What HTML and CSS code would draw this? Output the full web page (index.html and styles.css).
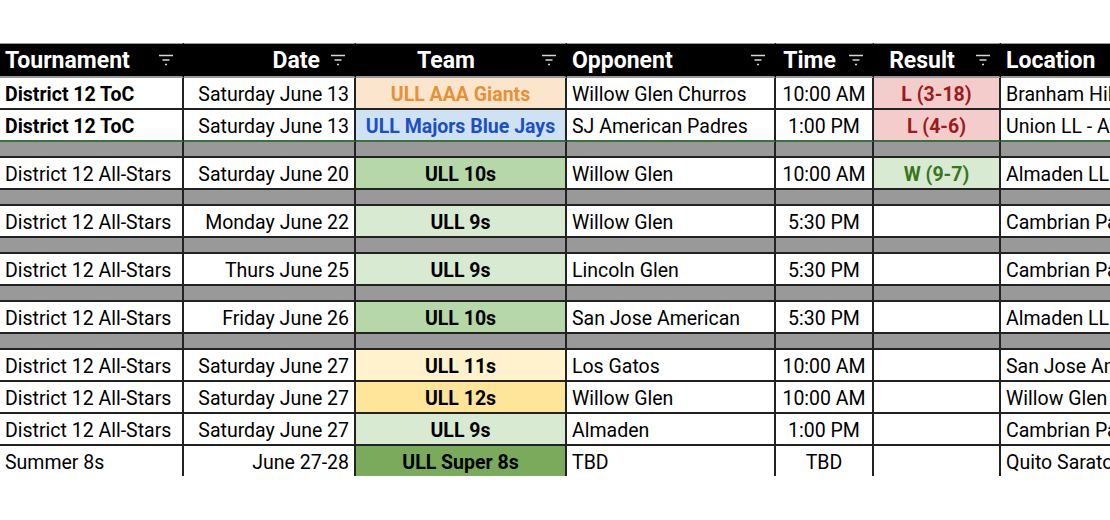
FILE: index.html
```html
<!DOCTYPE html>
<html lang="en">
<head>
<meta charset="utf-8">
<title>Schedule</title>
<link rel="stylesheet" href="styles.css">
</head>
<body>
<div class="sheet">
  <table class="schedule">
    <thead>
      <tr class="head-row">
        <th class="col-tour"><div class="hd hd-left"><span class="hd-label">Tournament</span><svg class="filter" viewBox="0 0 16 12" width="16" height="12"><path d="M1 1.5H15M4.5 6H11.5M7 10.5H9"/></svg></div></th>
        <th class="col-date"><div class="hd hd-right"><span class="hd-label">Date</span><svg class="filter" viewBox="0 0 16 12" width="16" height="12"><path d="M1 1.5H15M4.5 6H11.5M7 10.5H9"/></svg></div></th>
        <th class="col-team"><div class="hd hd-center"><span class="hd-label">Team</span><svg class="filter" viewBox="0 0 16 12" width="16" height="12"><path d="M1 1.5H15M4.5 6H11.5M7 10.5H9"/></svg></div></th>
        <th class="col-opp"><div class="hd hd-left"><span class="hd-label">Opponent</span><svg class="filter" viewBox="0 0 16 12" width="16" height="12"><path d="M1 1.5H15M4.5 6H11.5M7 10.5H9"/></svg></div></th>
        <th class="col-time"><div class="hd hd-center"><span class="hd-label">Time</span><svg class="filter" viewBox="0 0 16 12" width="16" height="12"><path d="M1 1.5H15M4.5 6H11.5M7 10.5H9"/></svg></div></th>
        <th class="col-result"><div class="hd hd-center"><span class="hd-label">Result</span><svg class="filter" viewBox="0 0 16 12" width="16" height="12"><path d="M1 1.5H15M4.5 6H11.5M7 10.5H9"/></svg></div></th>
        <th class="col-loc"><div class="hd hd-left"><span class="hd-label">Location</span><svg class="filter" viewBox="0 0 16 12" width="16" height="12"><path d="M1 1.5H15M4.5 6H11.5M7 10.5H9"/></svg></div></th>
      </tr>
    </thead>
    <tbody>
      <tr class="row">
        <td class="left bold">District 12 ToC</td>
        <td class="right">Saturday June 13</td>
        <td class="center bold team-giants">ULL AAA Giants</td>
        <td class="left">Willow Glen Churros</td>
        <td class="center">10:00 AM</td>
        <td class="center bold res-loss">L (3-18)</td>
        <td class="left">Branham Hills</td>
      </tr>
      <tr class="row row-green-edge">
        <td class="left bold">District 12 ToC</td>
        <td class="right">Saturday June 13</td>
        <td class="center bold team-jays">ULL Majors Blue Jays</td>
        <td class="left">SJ American Padres</td>
        <td class="center">1:00 PM</td>
        <td class="center bold res-loss">L (4-6)</td>
        <td class="left">Union LL - Alta Vista</td>
      </tr>
      <tr class="spacer"><td></td><td></td><td></td><td></td><td></td><td></td><td></td></tr>
      <tr class="row">
        <td class="left">District 12 All-Stars</td>
        <td class="right">Saturday June 20</td>
        <td class="center bold team-green2">ULL 10s</td>
        <td class="left">Willow Glen</td>
        <td class="center">10:00 AM</td>
        <td class="center bold res-win">W (9-7)</td>
        <td class="left">Almaden LL</td>
      </tr>
      <tr class="spacer"><td></td><td></td><td></td><td></td><td></td><td></td><td></td></tr>
      <tr class="row">
        <td class="left">District 12 All-Stars</td>
        <td class="right">Monday June 22</td>
        <td class="center bold team-green3">ULL 9s</td>
        <td class="left">Willow Glen</td>
        <td class="center">5:30 PM</td>
        <td class="center"></td>
        <td class="left">Cambrian Park</td>
      </tr>
      <tr class="spacer"><td></td><td></td><td></td><td></td><td></td><td></td><td></td></tr>
      <tr class="row">
        <td class="left">District 12 All-Stars</td>
        <td class="right">Thurs June 25</td>
        <td class="center bold team-green3">ULL 9s</td>
        <td class="left">Lincoln Glen</td>
        <td class="center">5:30 PM</td>
        <td class="center"></td>
        <td class="left">Cambrian Park</td>
      </tr>
      <tr class="spacer"><td></td><td></td><td></td><td></td><td></td><td></td><td></td></tr>
      <tr class="row">
        <td class="left">District 12 All-Stars</td>
        <td class="right">Friday June 26</td>
        <td class="center bold team-green2">ULL 10s</td>
        <td class="left">San Jose American</td>
        <td class="center">5:30 PM</td>
        <td class="center"></td>
        <td class="left">Almaden LL</td>
      </tr>
      <tr class="spacer"><td></td><td></td><td></td><td></td><td></td><td></td><td></td></tr>
      <tr class="row">
        <td class="left">District 12 All-Stars</td>
        <td class="right">Saturday June 27</td>
        <td class="center bold team-yellow3">ULL 11s</td>
        <td class="left">Los Gatos</td>
        <td class="center">10:00 AM</td>
        <td class="center"></td>
        <td class="left">San Jose American</td>
      </tr>
      <tr class="row">
        <td class="left">District 12 All-Stars</td>
        <td class="right">Saturday June 27</td>
        <td class="center bold team-yellow2">ULL 12s</td>
        <td class="left">Willow Glen</td>
        <td class="center">10:00 AM</td>
        <td class="center"></td>
        <td class="left">Willow Glen</td>
      </tr>
      <tr class="row">
        <td class="left">District 12 All-Stars</td>
        <td class="right">Saturday June 27</td>
        <td class="center bold team-green3">ULL 9s</td>
        <td class="left">Almaden</td>
        <td class="center">1:00 PM</td>
        <td class="center"></td>
        <td class="left">Cambrian Park</td>
      </tr>
      <tr class="row row-last">
        <td class="left">Summer 8s</td>
        <td class="right">June 27-28</td>
        <td class="center bold team-green1">ULL Super 8s</td>
        <td class="left">TBD</td>
        <td class="center">TBD</td>
        <td class="center"></td>
        <td class="left">Quito Saratoga</td>
      </tr>
    </tbody>
  </table>
</div>
</body>
</html>
```

FILE: styles.css
```css
* {
  box-sizing: border-box;
}

html, body {
  margin: 0;
  padding: 0;
  background: #ffffff;
}

body {
  width: 1110px;
  height: 520px;
  overflow: hidden;
  font-family: Roboto, "Liberation Sans", Arial, sans-serif;
  color: #000;
}

.sheet {
  padding-top: 43px;
}

.schedule {
  border-collapse: separate;
  border-spacing: 0;
  table-layout: fixed;
  width: 1221px;
}

.col-tour { width: 184px; }
.col-date { width: 172px; }
.col-team { width: 211px; }
.col-opp { width: 209px; }
.col-time { width: 98px; }
.col-result { width: 127px; }
.col-loc { width: 220px; }

.head-row th {
  background: #000;
  color: #fff;
  height: 35px;
  padding: 0 8px 0 5px;
  border-top: 1px solid #9a9a9a;
  border-bottom: 2px solid #9a9a9a;
  border-right: 2px solid #000;
  font-weight: 700;
  font-size: 23px;
  text-align: left;
}

.hd {
  display: flex;
  align-items: center;
  gap: 10px;
}

.hd-label {
  flex: 1;
  white-space: nowrap;
}

.hd-left .hd-label { text-align: left; }
.hd-right .hd-label { text-align: right; }
.hd-center .hd-label { text-align: center; }

.filter {
  flex: none;
  fill: none;
  stroke: #d6d6d6;
  stroke-width: 1.5;
}

.row td {
  height: 32px;
  padding: 2px 5px 0 5px;
  border-right: 2px solid #222;
  border-bottom: 2px solid #222;
  font-size: 19.5px;
  white-space: nowrap;
  overflow: hidden;
  vertical-align: middle;
}

.row-green-edge td {
  border-bottom-color: #3f6e3f;
}

.row-last td {
  border-bottom: none;
  height: 30px;
}

.spacer td {
  height: 16px;
  padding: 0;
  background: #999999;
  border-right: 2px solid #222;
  border-bottom: 2px solid #222;
}

.left { text-align: left; }
.right { text-align: right; }
.center { text-align: center; }
.bold { font-weight: 700; }

.team-giants { background: #fce5cd; color: #e69138; }
.team-jays { background: #cfe2f3; color: #1c4fc4; }
.team-green1 { background: #7aab5c; }
.team-green2 { background: #b6d7a8; }
.team-green3 { background: #d9ead3; }
.team-yellow2 { background: #ffe599; }
.team-yellow3 { background: #fff2cc; }

.res-loss { background: #f4cccc; color: #9c1b1b; }
.res-win { background: #d9ead3; color: #38761d; }
```
